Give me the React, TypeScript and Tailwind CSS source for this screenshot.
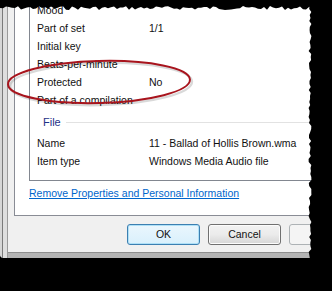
const rows = [
  { label: "Mood", value: "" },
  { label: "Part of set", value: "1/1" },
  { label: "Initial key", value: "" },
  { label: "Beats-per-minute", value: "" },
  { label: "Protected", value: "No" },
  { label: "Part of a compilation", value: "" },
];

const fileRows = [
  { label: "Name", value: "11 - Ballad of Hollis Brown.wma" },
  { label: "Item type", value: "Windows Media Audio file" },
];

// rough torn paper edge
function jagged(x0: number, x1: number, base: number, amp: number, seed: number) {
  const pts: string[] = [];
  let s = seed;
  for (let x = x0; x <= x1; x += 3) {
    s = (s * 9301 + 49297) % 233280;
    const r = s / 233280;
    pts.push(`${x},${(base + (r - 0.5) * amp).toFixed(1)}`);
  }
  return pts;
}

function jaggedV(y0: number, y1: number, base: number, amp: number, seed: number) {
  const pts: string[] = [];
  let s = seed;
  for (let y = y0; y <= y1; y += 3) {
    s = (s * 9301 + 49297) % 233280;
    const r = s / 233280;
    pts.push(`${(base + (r - 0.5) * amp).toFixed(1)},${y}`);
  }
  return pts;
}

function TornEdges() {
  const top = ["0,0", "332,0", "332,10", ...jagged(0, 312, 8, 4, 7).reverse()];
  const right = ["310,6", ...jaggedV(6, 261, 310, 3, 3), "332,262", "332,0"];
  return (
    <svg className="absolute left-0 top-0 pointer-events-none" width="332" height="291" viewBox="0 0 332 291">
      <polygon points={top.join(" ")} fill="#000" />
      <polygon points={right.join(" ")} fill="#000" />
    </svg>
  );
}

function Ellipse() {
  return (
    <svg className="absolute left-0 top-0 pointer-events-none" width="332" height="291" viewBox="0 0 332 291">
      <ellipse cx="101" cy="84" rx="91" ry="21" fill="none" stroke="rgba(0,0,0,0.15)" strokeWidth="2.5" transform="rotate(-1.5 101 84)" />
      <ellipse cx="99" cy="82" rx="91" ry="21" fill="none" stroke="#a8141d" strokeWidth="2" transform="rotate(-1.5 99 82)" />
    </svg>
  );
}

function Row({ label, value }: { label: string; value: string }) {
  return (
    <div className="flex h-[18px] items-center pl-[7px] whitespace-nowrap">
      <span className="w-[112px] shrink-0">{label}</span>
      <span>{value}</span>
    </div>
  );
}

export default function App() {
  return (
    <div className="relative w-[332px] h-[291px] bg-black overflow-hidden font-['Liberation_Sans',Arial,sans-serif] text-[10.5px] text-[#111]">
      <div className="flex w-[380px] h-[258px]">
        <div className="w-[8px] shrink-0 flex rounded-bl-[4px] overflow-hidden bg-[#c9c9c9]">
          <div className="w-[2px] bg-[#d6d6d6]" />
          <div className="w-[1px] bg-[#7a7a7a]" />
          <div className="w-[4px] bg-[#dedede]" />
          <div className="w-[1px] bg-[#9a9a9a]" />
        </div>
        <div className="flex-1 flex flex-col bg-[#f0f0f0]">
          <div className="ml-[6px] h-[216px] bg-white border-l border-b border-[#898c95] flex flex-col">
            <div className="ml-[14px] border-l border-b border-[#828790] pt-[2px] pb-[9px]">
              {rows.map((r) => (
                <Row key={r.label} {...r} />
              ))}
              <div className="flex h-[25px] items-center pl-[13px] text-[#1e3287] text-[11px]">
                <span>File</span>
                <div className="flex-1 ml-[5px] h-px bg-[#e2e2e2]" />
              </div>
              {fileRows.map((r) => (
                <Row key={r.label} {...r} />
              ))}
            </div>
            <div className="ml-[14px] mt-[3px] leading-[18px]">
              <span className="text-[#0066cc] underline whitespace-nowrap">
                Remove Properties and Personal Information
              </span>
            </div>
          </div>
          <div className="flex gap-[8px] ml-[119px] mt-[8px]">
            <button className="w-[73px] h-[21px] rounded-[3px] border border-[#3c7fb1] bg-gradient-to-b from-[#eaf6fd] to-[#d9f0fc] shadow-[inset_0_0_0_1px_#aee0f7]">
              OK
            </button>
            <button className="w-[73px] h-[21px] rounded-[3px] border border-[#707070] bg-gradient-to-b from-[#f2f2f2] via-[#ebebeb] to-[#d6d6d6] shadow-[inset_0_0_0_1px_#fcfcfc]">
              Cancel
            </button>
            <button className="w-[73px] h-[21px] rounded-[3px] border border-[#adb2b5] bg-[#f4f4f4]" />
          </div>
          <div className="flex-1" />
          <div className="h-px bg-[#8e8e8e]" />
          <div className="h-[5px] bg-[#b4b4b4]" />
        </div>
      </div>
      <Ellipse />
      <TornEdges />
    </div>
  );
}
